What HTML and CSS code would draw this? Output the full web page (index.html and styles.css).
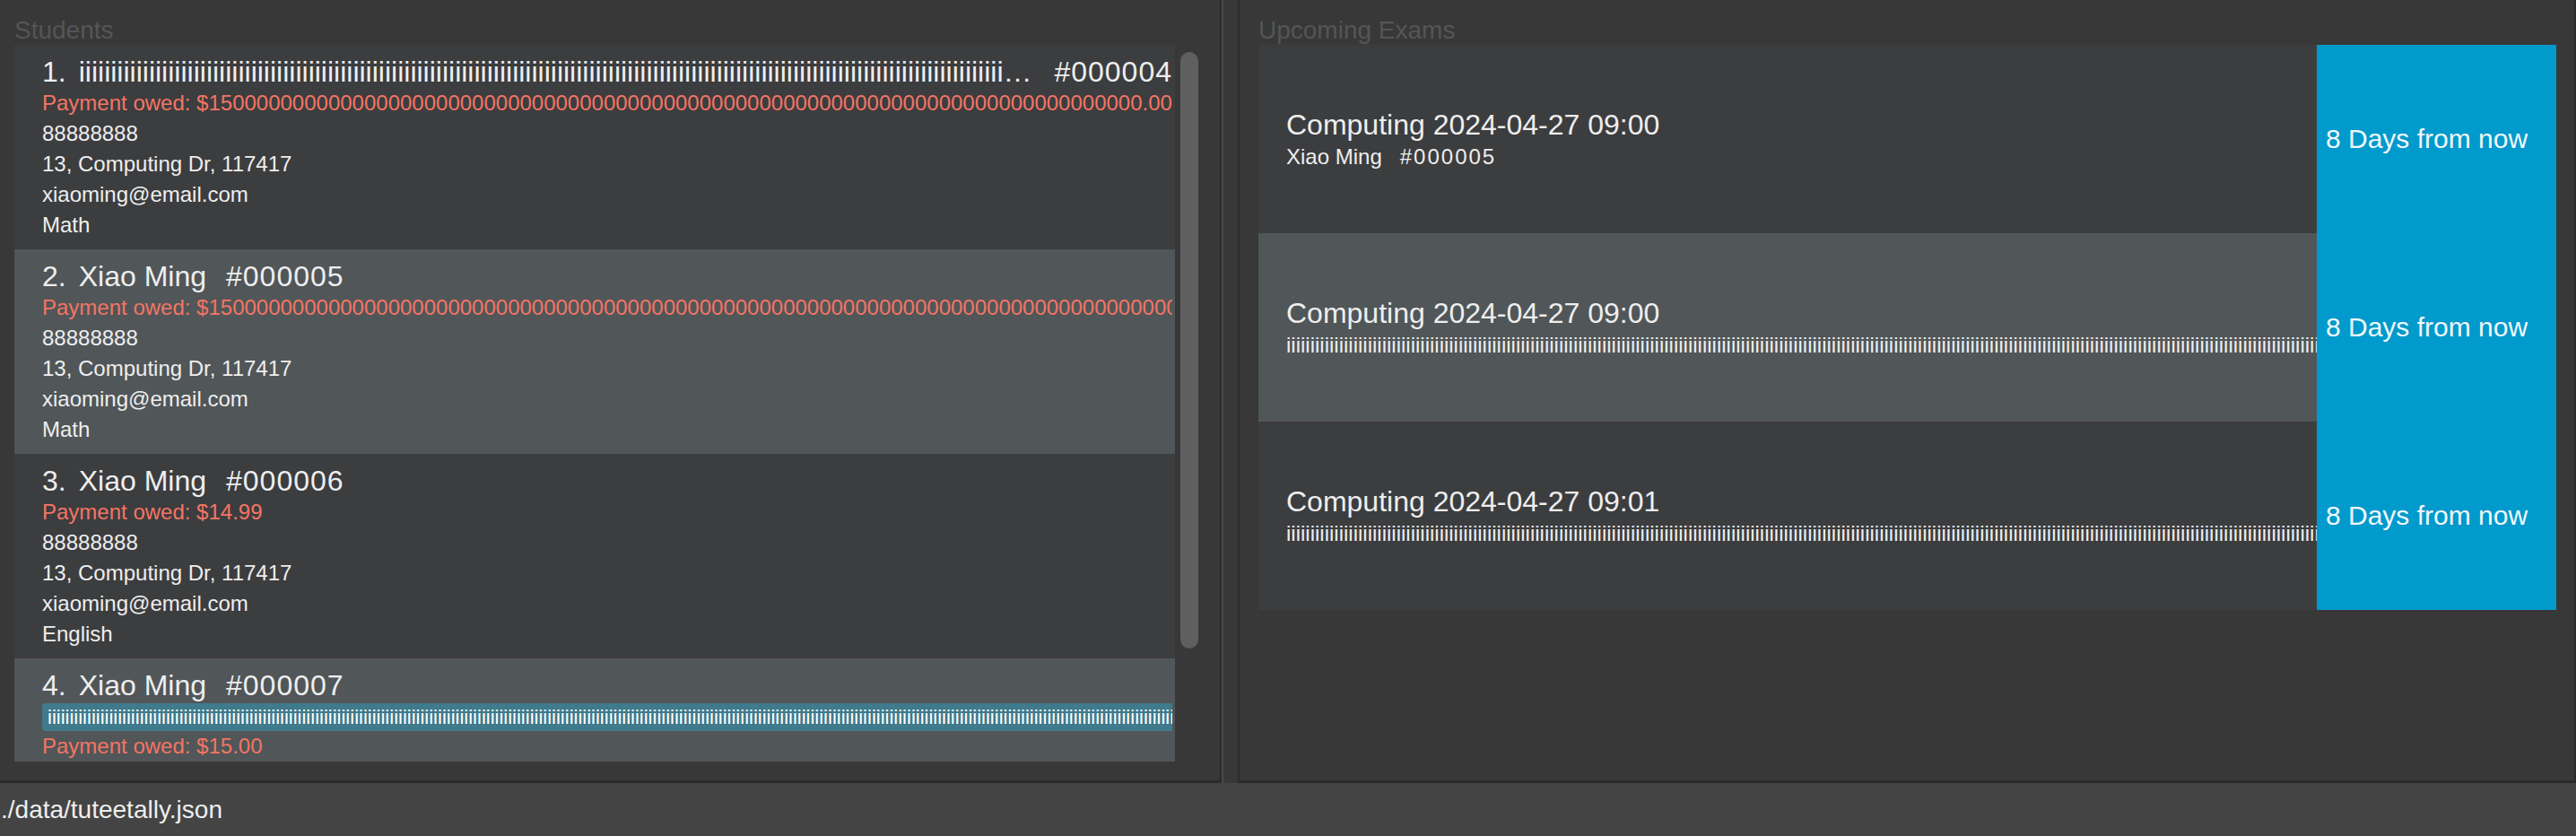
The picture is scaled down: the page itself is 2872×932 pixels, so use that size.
FILE: index.html
```html
<!DOCTYPE html>
<html>
<head>
<meta charset="utf-8">
<link rel="stylesheet" href="styles.css">
</head>
<body>
<div class="app">
  <div class="main">
    <section class="pane pane-left">
      <div class="pane-title">Students</div>
      <div class="list-wrap">
        <div class="list">
          <div class="card odd">
            <div class="title-row"><span class="num">1.</span><span class="name">iiiiiiiiiiiiiiiiiiiiiiiiiiiiiiiiiiiiiiiiiiiiiiiiiiiiiiiiiiiiiiiiiiiiiiiiiiiiiiiiiiiiiiiiiiiiiiiiiiiiiiiiiiiiiiiiiiiiiiiiiiiiiiiiiiiiiiiiiiiiiiiiiiiiiiiiiiiiiiiiiiiiiiiiiiiiiiiiiiiiiiiiiiiiiiiiiiiiiiiiiiiiiiiiiiiiiiii</span><span class="sid">#000004</span></div>
            <div class="line owed">Payment owed: $150000000000000000000000000000000000000000000000000000000000000000000000000000.00</div>
            <div class="line">88888888</div>
            <div class="line">13, Computing Dr, 117417</div>
            <div class="line">xiaoming@email.com</div>
            <div class="line">Math</div>
          </div>
          <div class="card even">
            <div class="title-row"><span class="num">2.</span><span class="name">Xiao Ming</span><span class="sid">#000005</span></div>
            <div class="line owed">Payment owed: $15000000000000000000000000000000000000000000000000000000000000000000000000000000000000000000.00</div>
            <div class="line">88888888</div>
            <div class="line">13, Computing Dr, 117417</div>
            <div class="line">xiaoming@email.com</div>
            <div class="line">Math</div>
          </div>
          <div class="card odd">
            <div class="title-row"><span class="num">3.</span><span class="name">Xiao Ming</span><span class="sid">#000006</span></div>
            <div class="line owed">Payment owed: $14.99</div>
            <div class="line">88888888</div>
            <div class="line">13, Computing Dr, 117417</div>
            <div class="line">xiaoming@email.com</div>
            <div class="line">English</div>
          </div>
          <div class="card even">
            <div class="title-row"><span class="num">4.</span><span class="name">Xiao Ming</span><span class="sid">#000007</span></div>
            <div class="tags"><span class="tag">iiiiiiiiiiiiiiiiiiiiiiiiiiiiiiiiiiiiiiiiiiiiiiiiiiiiiiiiiiiiiiiiiiiiiiiiiiiiiiiiiiiiiiiiiiiiiiiiiiiiiiiiiiiiiiiiiiiiiiiiiiiiiiiiiiiiiiiiiiiiiiiiiiiiiiiiiiiiiiiiiiiiiiiiiiiiiiiiiiiiiiiiiiiiiiiiiiiiiiiiiiiiiiiiiiiiiiiiiiiiiiiiiiiiiiiiiiiiiiiiiiiiiiiiiiiiiiiiiiiiiiiiiiiiiiii</span></div>
            <div class="line owed">Payment owed: $15.00</div>
            <div class="line">88888888</div>
          </div>
        </div>
        <div class="scrollbar"><div class="thumb"></div></div>
      </div>
    </section>
    <div class="divider"></div>
    <section class="pane pane-right">
      <div class="pane-title">Upcoming Exams</div>
      <div class="exams">
        <div class="exam odd">
          <div class="exam-info">
            <div class="exam-title">Computing 2024-04-27 09:00</div>
            <div class="exam-sub"><span>Xiao Ming</span><span class="exam-id">#000005</span></div>
          </div>
          <div class="exam-when">8 Days from now</div>
        </div>
        <div class="exam even">
          <div class="exam-info">
            <div class="exam-title">Computing 2024-04-27 09:00</div>
            <div class="exam-sub">iiiiiiiiiiiiiiiiiiiiiiiiiiiiiiiiiiiiiiiiiiiiiiiiiiiiiiiiiiiiiiiiiiiiiiiiiiiiiiiiiiiiiiiiiiiiiiiiiiiiiiiiiiiiiiiiiiiiiiiiiiiiiiiiiiiiiiiiiiiiiiiiiiiiiiiiiiiiiiiiiiiiiiiiiiiiiiiiiiiiiiiiiiiiiiiiiiiiiiiiiiiiiiiiiiiiiiiiiiiiiiiiiiiiiiiiiiiiiiiiiiiiiiiiiiiiiiiiiiiiiiiiiiiiiiiiii</div>
          </div>
          <div class="exam-when">8 Days from now</div>
        </div>
        <div class="exam odd">
          <div class="exam-info">
            <div class="exam-title">Computing 2024-04-27 09:01</div>
            <div class="exam-sub">iiiiiiiiiiiiiiiiiiiiiiiiiiiiiiiiiiiiiiiiiiiiiiiiiiiiiiiiiiiiiiiiiiiiiiiiiiiiiiiiiiiiiiiiiiiiiiiiiiiiiiiiiiiiiiiiiiiiiiiiiiiiiiiiiiiiiiiiiiiiiiiiiiiiiiiiiiiiiiiiiiiiiiiiiiiiiiiiiiiiiiiiiiiiiiiiiiiiiiiiiiiiiiiiiiiiiiiiiiiiiiiiiiiiiiiiiiiiiiiiiiiiiiiiiiiiiiiiiiiiiiiiiiiiiiiiiii</div>
          </div>
          <div class="exam-when">8 Days from now</div>
        </div>
      </div>
    </section>
  </div>
  <footer class="status">./data/tuteetally.json</footer>
</div>
</body>
</html>
```

FILE: styles.css
```css
* { box-sizing: border-box; }
html, body {
  margin: 0;
  padding: 0;
  background: #383838;
  font-family: "Liberation Sans", Arial, sans-serif;
  color: #eeeeee;
}
.app {
  width: 2872px;
  height: 932px;
  display: flex;
  flex-direction: column;
  overflow: hidden;
}
.main {
  height: 873px;
  flex-shrink: 0;
  display: flex;
  flex-direction: row;
}
.pane {
  display: flex;
  flex-direction: column;
  border-bottom: 3px solid #2b2b2b;
  min-width: 0;
}
.pane-left {
  width: 1362px;
  flex-shrink: 0;
  padding: 18px 24px 0 16px;
  border-right: 2px solid #2b2b2b;
}
.divider {
  width: 18px;
  flex-shrink: 0;
  border-left: 2px solid #4a4a4a;
  height: 873px;
}
.pane-right {
  flex: 1 1 0;
  padding: 18px 20px 0 21px;
  border-left: 2px solid #2b2b2b;
  border-right: 2px solid #2b2b2b;
}
.pane-title {
  font-size: 28px;
  line-height: 32px;
  height: 32px;
  color: #555555;
  white-space: nowrap;
}
.list-wrap {
  display: flex;
  flex-direction: row;
  height: 799px;
}
.list {
  flex: 1;
  overflow: hidden;
  min-width: 0;
}
.card {
  padding: 13px 3px 10px 31px;
  overflow: hidden;
}
.odd { background: #3c3d3f; }
.even { background: #515658; }
.title-row {
  display: flex;
  font-size: 32px;
  line-height: 35px;
  white-space: nowrap;
}
.num { flex-shrink: 0; margin-right: 14px; }
.name {
  flex: 0 1 auto;
  min-width: 0;
  overflow: hidden;
  text-overflow: ellipsis;
}
.sid { flex-shrink: 0; margin-left: 22px; letter-spacing: 1px; }
.line {
  font-size: 24px;
  line-height: 34px;
  white-space: nowrap;
  overflow: hidden;
}
.owed { color: #f37564; }
.tags {
  margin-top: 2px;
  overflow: hidden;
  white-space: nowrap;
}
.tag {
  display: inline-block;
  background: #3f7a8d;
  border-radius: 4px 0 0 4px;
  font-size: 22px;
  line-height: 31px;
  padding: 0 6px;
  color: #ffffff;
}
.scrollbar {
  width: 20px;
  flex-shrink: 0;
  margin-left: 6px;
  padding-top: 8px;
}
.thumb {
  height: 665px;
  background: #5f5f5f;
  border-radius: 10px;
}
.exams {
  display: flex;
  flex-direction: column;
  min-width: 0;
  overflow: hidden;
}
.exam {
  height: 210px;
  display: flex;
  flex-direction: row;
  min-width: 0;
}
.exam-info {
  flex: 1 1 0;
  min-width: 0;
  overflow: hidden;
  padding-left: 31px;
  display: flex;
  flex-direction: column;
  justify-content: center;
}
.exam-title {
  font-size: 32px;
  line-height: 34px;
  white-space: nowrap;
}
.exam-sub {
  font-size: 24px;
  line-height: 28px;
  margin-top: 5px;
  white-space: nowrap;
  overflow: hidden;
}
.exam-id { margin-left: 20px; letter-spacing: 2px; }
.exam-when {
  width: 267px;
  flex-shrink: 0;
  background: #009acc;
  display: flex;
  align-items: center;
  padding-left: 10px;
  font-size: 30px;
  color: #f2f8fb;
  white-space: nowrap;
}
.status {
  flex: 1;
  background: #444444;
  font-size: 28px;
  line-height: 59px;
  padding-left: 1px;
  color: #eeeeee;
  white-space: nowrap;
}
```
